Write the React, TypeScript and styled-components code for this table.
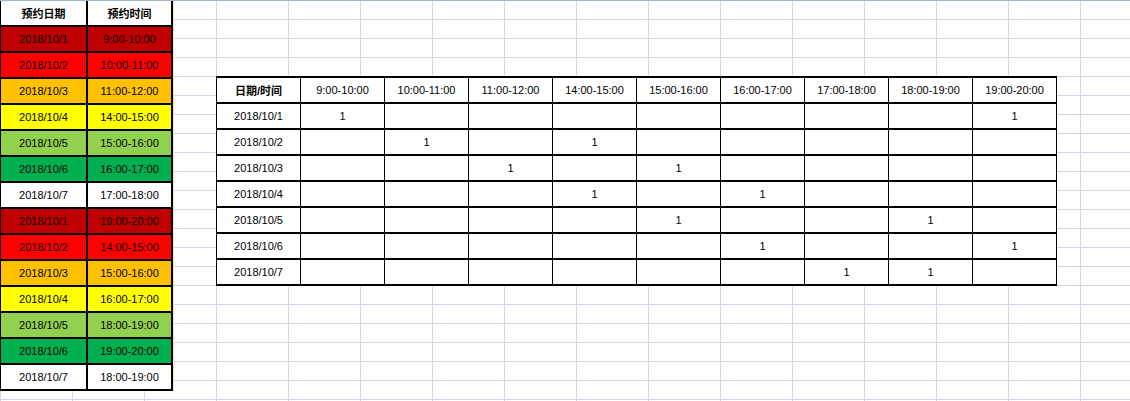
import React from "react";
import styled, { createGlobalStyle } from "styled-components";

const GlobalStyle = createGlobalStyle`
  html, body { margin: 0; padding: 0; background: #fff; overflow: hidden; }
  body { font-family: "Liberation Sans", "Noto Sans CJK SC", sans-serif; }
`;

const Sheet = styled.div`
  position: relative;
  width: 1130px;
  height: 401px;
  box-sizing: border-box;
  border-top: 1px solid #9eb6ce;
  background-color: #fff;
  background-image:
    linear-gradient(to right, #d0d7e5 1px, transparent 1px),
    linear-gradient(to bottom, #d0d7e5 1px, transparent 1px);
  background-size: 72px 19px;
  background-origin: border-box;
  display: flex;
  align-items: flex-start;
  overflow: hidden;

  &::before {
    content: "";
    position: absolute;
    left: 792px;
    top: -1px;
    width: 72px;
    height: 1px;
    background: #f29436;
  }
`;

const ListGrid = styled.div`
  display: grid;
  grid-template-columns: 85px 83px;
  grid-auto-rows: 24px;
  grid-template-rows: 25px;
  gap: 2px;
  padding: 0 2px 2px 1px;
  margin-top: -1px;
  background: #000;
  box-shadow: 1px 0 0 #fbe0c8;
  font-size: 11px;
  color: #000;
`;

const ListCell = styled.div<{ $bg: string; $head?: boolean }>`
  background: ${(p) => p.$bg};
  display: flex;
  align-items: center;
  justify-content: center;
  font-weight: ${(p) => (p.$head ? 700 : 400)};
  white-space: nowrap;
`;

const MatrixGrid = styled.div`
  margin-left: 43px;
  margin-top: 75px;
  display: grid;
  grid-template-columns: repeat(10, 83px);
  grid-auto-rows: 24px;
  column-gap: 1px;
  row-gap: 2px;
  padding: 2px 1px 2px 1px;
  background: #000;
  font-size: 11px;
  color: #000;
`;

const MatrixCell = styled.div<{ $head?: boolean }>`
  background: #fff;
  display: flex;
  align-items: center;
  justify-content: center;
  white-space: nowrap;
  font-weight: ${(p) => (p.$head ? 700 : 400)};
`;

const C = {
  darkRed: "#c00000",
  red: "#ff0000",
  orange: "#ffc000",
  yellow: "#ffff00",
  lightGreen: "#92d050",
  green: "#00b050",
  white: "#ffffff",
};

const list: [string, string, string][] = [
  ["2018/10/1", "9:00-10:00", C.darkRed],
  ["2018/10/2", "10:00-11:00", C.red],
  ["2018/10/3", "11:00-12:00", C.orange],
  ["2018/10/4", "14:00-15:00", C.yellow],
  ["2018/10/5", "15:00-16:00", C.lightGreen],
  ["2018/10/6", "16:00-17:00", C.green],
  ["2018/10/7", "17:00-18:00", C.white],
  ["2018/10/1", "19:00-20:00", C.darkRed],
  ["2018/10/2", "14:00-15:00", C.red],
  ["2018/10/3", "15:00-16:00", C.orange],
  ["2018/10/4", "16:00-17:00", C.yellow],
  ["2018/10/5", "18:00-19:00", C.lightGreen],
  ["2018/10/6", "19:00-20:00", C.green],
  ["2018/10/7", "18:00-19:00", C.white],
];

const slots = [
  "9:00-10:00",
  "10:00-11:00",
  "11:00-12:00",
  "14:00-15:00",
  "15:00-16:00",
  "16:00-17:00",
  "17:00-18:00",
  "18:00-19:00",
  "19:00-20:00",
];

const dates = [
  "2018/10/1",
  "2018/10/2",
  "2018/10/3",
  "2018/10/4",
  "2018/10/5",
  "2018/10/6",
  "2018/10/7",
];

export default function App() {
  return (
    <>
      <GlobalStyle />
      <Sheet>
        <ListGrid>
          <ListCell $bg="#fff" $head>预约日期</ListCell>
          <ListCell $bg="#fff" $head>预约时间</ListCell>
          {list.map(([d, t, bg], i) => (
            <React.Fragment key={i}>
              <ListCell $bg={bg}>{d}</ListCell>
              <ListCell $bg={bg}>{t}</ListCell>
            </React.Fragment>
          ))}
        </ListGrid>
        <MatrixGrid>
          <MatrixCell $head>日期/时间</MatrixCell>
          {slots.map((s) => (
            <MatrixCell key={s}>{s}</MatrixCell>
          ))}
          {dates.map((d) => (
            <React.Fragment key={d}>
              <MatrixCell>{d}</MatrixCell>
              {slots.map((s) => {
                const hit = list.some(([ld, lt]) => ld === d && lt === s);
                return <MatrixCell key={s}>{hit ? "1" : ""}</MatrixCell>;
              })}
            </React.Fragment>
          ))}
        </MatrixGrid>
      </Sheet>
    </>
  );
}
